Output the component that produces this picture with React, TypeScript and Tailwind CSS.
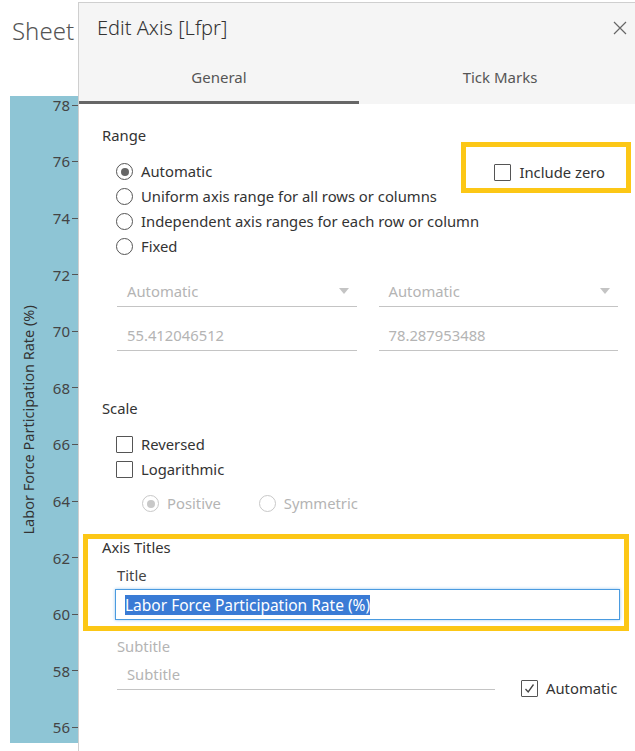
import React from 'react';

const font = { fontFamily: '"Noto Sans", "Open Sans", Arial, sans-serif' };

const ticks = [78, 76, 74, 72, 70, 68, 66, 64, 62, 60, 58, 56];

function Radio({ checked, disabled, label }: { checked?: boolean; disabled?: boolean; label: string }) {
  const ring = disabled ? 'border-[#c8c8c8]' : 'border-[#555]';
  const dot = disabled ? 'bg-[#c8c8c8]' : 'bg-[#666]';
  return (
    <div className="flex items-center h-[25px]">
      <span className={`w-[17px] h-[17px] rounded-full border ${ring} flex items-center justify-center`}>
        {checked && <span className={`w-[8px] h-[8px] rounded-full ${dot}`} />}
      </span>
      <span className={`ml-[8px] text-[14.8px] ${disabled ? 'text-[#b4b4b4]' : 'text-[#333]'}`}>{label}</span>
    </div>
  );
}

function Check({ checked, label }: { checked?: boolean; label: string }) {
  return (
    <div className="flex items-center h-[25px]">
      <span className="w-[17px] h-[17px] border border-[#555] rounded-[1px] flex items-center justify-center">
        {checked && (
          <svg width="13" height="13" viewBox="0 0 13 13" fill="none">
            <path d="M2.5 7 L5.2 10 L10.5 2.5" stroke="#444" strokeWidth="1.3" />
          </svg>
        )}
      </span>
      <span className="ml-[8px] text-[14.8px] text-[#333]">{label}</span>
    </div>
  );
}

function Select({ value }: { value: string }) {
  return (
    <div className="flex-1 h-[31px] border-b border-[#c4c4c4] flex items-center justify-between pl-[10px] pr-[8px]">
      <span className="text-[14.8px] text-[#b4b4b4]">{value}</span>
      <svg width="10" height="6" viewBox="0 0 10 6"><path d="M0 0 L10 0 L5 6 Z" fill="#c4c4c4" /></svg>
    </div>
  );
}

function Field({ value }: { value: string }) {
  return (
    <div className="flex-1 h-[31px] border-b border-[#c4c4c4] flex items-center pl-[10px]">
      <span className="text-[14.8px] text-[#b4b4b4]">{value}</span>
    </div>
  );
}

export default function App() {
  return (
    <div className="relative w-[635px] h-[751px] bg-white overflow-hidden" style={font}>
      {/* Worksheet behind the dialog */}
      <div className="flex flex-col pl-[10px]">
        <div className="h-[96px] pt-[13px] pl-[2px] text-[24px] font-light text-[#555]">Sheet 1</div>
        <div className="w-[68px] h-[647px] bg-[#8ec5d5] relative flex">
          <div className="w-[38px] flex items-center justify-center">
            <span className="-rotate-90 whitespace-nowrap text-[14.5px] text-[#333]">Labor Force Participation Rate (%)</span>
          </div>
          <div className="flex-1 flex flex-col items-end pt-[1px] gap-[40.6px]">
            {ticks.map((t) => (
              <div key={t} className="h-[16px] flex items-center text-[15px] text-[#444]">
                <span>{t}</span>
                <span className="w-[6px] h-px bg-[#555] ml-[2px]" />
              </div>
            ))}
          </div>
        </div>
      </div>

      {/* Edit Axis dialog */}
      <div className="absolute left-[78px] top-[2px] w-[600px] h-[760px] bg-white border border-[#cfcfcf] flex flex-col">
        <div className="bg-[#f5f5f5] h-[101px] flex flex-col">
          <div className="h-[50px] flex items-center justify-between pl-[18px] pr-[50px]">
            <span className="text-[20px] text-[#333] font-light">Edit Axis [Lfpr]</span>
            <svg width="14" height="14" viewBox="0 0 14 14" fill="none">
              <path d="M1 1 L13 13 M13 1 L1 13" stroke="#666" strokeWidth="1.2" />
            </svg>
          </div>
          <div className="flex-1 flex">
            <div className="w-[280px] flex items-center justify-center border-b-[3px] border-[#666]">
              <span className="text-[15px] text-[#555]">General</span>
            </div>
            <div className="w-[282px] flex items-center justify-center border-b-[3px] border-transparent">
              <span className="text-[15px] text-[#555]">Tick Marks</span>
            </div>
          </div>
        </div>

        <div className="pl-[23px] pr-[16px] pt-[21px] w-[557px]">
          <div className="text-[14.8px] text-[#333] h-[20px] leading-[20px]">Range</div>
          <div className="pl-[14px] mt-[14px]">
            <Radio checked label="Automatic" />
            <Radio label="Uniform axis range for all rows or columns" />
            <Radio label="Independent axis ranges for each row or column" />
            <Radio label="Fixed" />
          </div>
          <div className="absolute left-[382px] top-[139px] w-[170px] h-[51px] border-[5px] border-[#fcc716] flex items-center justify-end pr-[21px] pt-[10px]">
            <Check label="Include zero" />
          </div>

          <div className="pl-[15px] pr-[2px] mt-[17px] flex flex-col gap-[14px]">
            <div className="flex gap-[22px]">
              <Select value="Automatic" />
              <Select value="Automatic" />
            </div>
            <div className="flex gap-[22px] -mt-[1px]">
              <Field value="55.412046512" />
              <Field value="78.287953488" />
            </div>
          </div>

          <div className="text-[14.8px] text-[#333] h-[20px] leading-[20px] mt-[47px]">Scale</div>
          <div className="pl-[14px] mt-[14px]">
            <Check label="Reversed" />
            <Check label="Logarithmic" />
            <div className="flex pl-[26px] mt-[9px] gap-[38px]">
              <Radio checked disabled label="Positive" />
              <Radio disabled label="Symmetric" />
            </div>
          </div>

          <div className="-ml-[19px] mt-[18px] w-[546px] h-[97px] border-[5px] border-[#fcc716] pl-[14px] pr-[4px]">
            <div className="text-[14.8px] text-[#333] h-[18px] leading-[18px] -mt-[1px]">Axis Titles</div>
            <div className="pl-[15px]">
              <div className="text-[14.8px] text-[#444] h-[18px] leading-[18px] mt-[10px]">Title</div>
              <div className="mt-[5px] -ml-[2px] h-[31px] border border-[#4a9be0] shadow-[0_0_3px_#9cc8ee] flex items-center pl-[9px]">
                <span className="text-[15.5px] text-white bg-[#3a7bd5] leading-[20px]">Labor Force Participation Rate (%)</span>
              </div>
            </div>
          </div>

          <div className="pl-[15px] mt-[6px]">
            <div className="text-[14.8px] text-[#b4b4b4] h-[18px] leading-[18px]">Subtitle</div>
            <div className="flex items-end mt-[4px]">
              <div className="w-[378px] h-[31px] border-b border-[#c4c4c4] flex items-center pl-[10px]">
                <span className="text-[14.8px] text-[#b4b4b4]">Subtitle</span>
              </div>
              <div className="ml-[26px] -mb-[11px]">
                <Check checked label="Automatic" />
              </div>
            </div>
          </div>
        </div>
      </div>
    </div>
  );
}
